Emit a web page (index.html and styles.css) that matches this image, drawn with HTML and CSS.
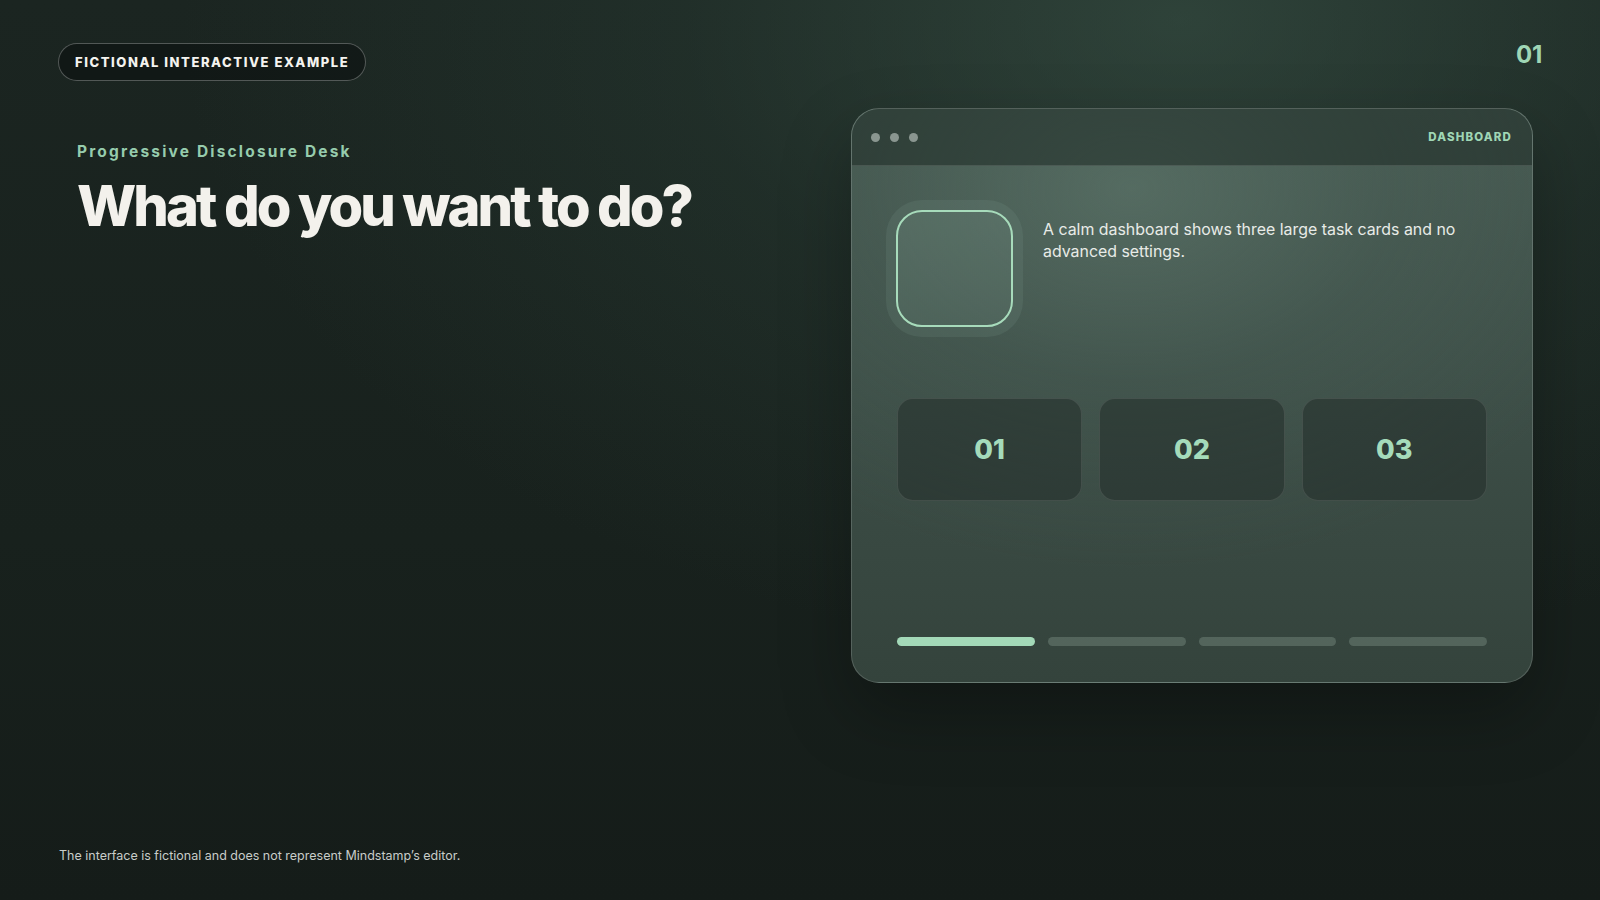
FILE: index.html
```html
<!DOCTYPE html>
<html lang="en">
<head>
<meta charset="utf-8">
<title>Progressive Disclosure Desk</title>
<link rel="stylesheet" href="styles.css">
</head>
<body>
<div class="page">
  <header class="topbar">
    <span class="pill">FICTIONAL INTERACTIVE EXAMPLE</span>
    <span class="slide-num">01</span>
  </header>
  <main class="stage">
    <section class="intro">
      <p class="eyebrow">Progressive Disclosure Desk</p>
      <h1 class="title">What do you want to do?</h1>
    </section>
    <section class="window">
      <div class="window-bar">
        <div class="dots"><span class="dot"></span><span class="dot"></span><span class="dot"></span></div>
        <span class="window-label">DASHBOARD</span>
      </div>
      <div class="window-body">
        <div class="feature">
          <div class="halo"><div class="frame"></div></div>
          <p class="feature-text">A calm dashboard shows three large task cards and no advanced settings.</p>
        </div>
        <div class="cards">
          <div class="card">01</div>
          <div class="card">02</div>
          <div class="card">03</div>
        </div>
        <div class="progress">
          <span class="seg active"></span>
          <span class="seg"></span>
          <span class="seg"></span>
          <span class="seg"></span>
        </div>
      </div>
    </section>
  </main>
  <footer class="footnote">The interface is fictional and does not represent Mindstamp’s editor.</footer>
</div>
</body>
</html>
```
FILE: styles.css
```css
* { box-sizing: border-box; }
html, body { margin: 0; padding: 0; }
body {
  width: 1600px;
  height: 900px;
  overflow: hidden;
  font-family: Inter, "Noto Sans", "Liberation Sans", sans-serif;
  color: #f2f0ea;
  background:
    radial-gradient(ellipse 1000px 640px at 1180px 20px, rgba(66, 96, 82, 0.5) 0%, rgba(48, 72, 62, 0.28) 50%, rgba(30, 44, 38, 0) 100%),
    linear-gradient(180deg, #1b2521 0%, #18211d 60%, #151c19 100%);
}
.page {
  height: 900px;
  display: flex;
  flex-direction: column;
}
.topbar {
  display: flex;
  justify-content: space-between;
  align-items: flex-start;
  padding: 43px 58px 0 58px;
}
.pill {
  display: inline-flex;
  align-items: center;
  height: 38px;
  padding: 0 16px 0 16px;
  border: 1px solid rgba(255, 255, 255, 0.28);
  border-radius: 19px;
  background: rgba(8, 12, 11, 0.5);
  font-size: 13px;
  font-weight: 800;
  letter-spacing: 0.12em;
  color: #f4f3ef;
}
.slide-num {
  font-size: 24px;
  font-weight: 700;
  color: #9fd6b5;
  line-height: 1;
  letter-spacing: -0.01em;
}
.stage {
  flex: 1;
  display: grid;
  grid-template-columns: 1fr 682px;
  padding: 27px 67px 0 77px;
  align-items: start;
}
.intro { padding-top: 34px; }
.eyebrow {
  margin: 0;
  font-size: 15.5px;
  font-weight: 700;
  letter-spacing: 0.14em;
  color: #96ccad;
  line-height: 20px;
}
.title {
  margin: 12px 0 0 0;
  font-size: 56px;
  font-weight: 800;
  letter-spacing: -0.052em;
  line-height: 64px;
  color: #f3f1ec;
}
.window {
  height: 575px;
  display: flex;
  flex-direction: column;
  border: 1px solid rgba(255, 255, 255, 0.16);
  border-radius: 28px;
  overflow: hidden;
  background:
    radial-gradient(ellipse 520px 380px at 280px 80px, rgba(98, 124, 112, 0.55) 0%, rgba(80, 104, 94, 0.25) 50%, rgba(60, 80, 72, 0) 100%),
    linear-gradient(180deg, #475a52 0%, #3c4d46 55%, #34433c 100%);
  box-shadow: 0 30px 70px rgba(0, 0, 0, 0.28);
}
.window-bar {
  height: 57px;
  flex: none;
  display: flex;
  align-items: center;
  justify-content: space-between;
  padding: 0 20px 0 19px;
  background: rgba(30, 42, 37, 0.55);
  border-bottom: 1px solid rgba(255, 255, 255, 0.12);
}
.dots { display: flex; gap: 10px; }
.dot {
  width: 9px;
  height: 9px;
  border-radius: 50%;
  background: #8a9690;
}
.window-label {
  font-size: 11.5px;
  font-weight: 800;
  letter-spacing: 0.1em;
  color: #9fd6b5;
}
.window-body {
  flex: 1;
  display: flex;
  flex-direction: column;
  padding: 34px 45px 36px 45px;
}
.feature {
  display: flex;
  align-items: flex-start;
  gap: 20px;
}
.halo {
  width: 137px;
  height: 137px;
  padding: 10px;
  margin-left: -11px;
  border-radius: 36px;
  background: rgba(120, 150, 136, 0.18);
  flex: none;
}
.frame {
  width: 117px;
  height: 117px;
  border: 2px solid #a7dbbb;
  border-radius: 26px;
  background: linear-gradient(160deg, rgba(110, 140, 126, 0.18), rgba(80, 104, 94, 0.06));
}
.feature-text {
  margin: 19px 0 0 0;
  font-size: 15.9px;
  line-height: 22px;
  color: #e8ebe7;
  max-width: 440px;
}
.cards {
  margin-top: 61px;
  display: grid;
  grid-template-columns: repeat(3, 1fr);
  gap: 17px;
}
.card {
  height: 103px;
  display: flex;
  align-items: center;
  justify-content: center;
  border: 1px solid rgba(255, 255, 255, 0.1);
  border-radius: 16px;
  background: rgba(34, 46, 41, 0.55);
  font-size: 27px;
  font-weight: 800;
  color: #a5dbbb;
}
.progress {
  margin-top: auto;
  display: grid;
  grid-template-columns: repeat(4, 1fr);
  gap: 13px;
}
.seg {
  height: 9px;
  border-radius: 5px;
  background: rgba(140, 160, 150, 0.35);
}
.seg.active { background: #a3d9b8; }
.footnote {
  padding: 0 0 36px 59px;
  font-size: 12.5px;
  line-height: 16px;
  color: #c8ccc9;
}
```
